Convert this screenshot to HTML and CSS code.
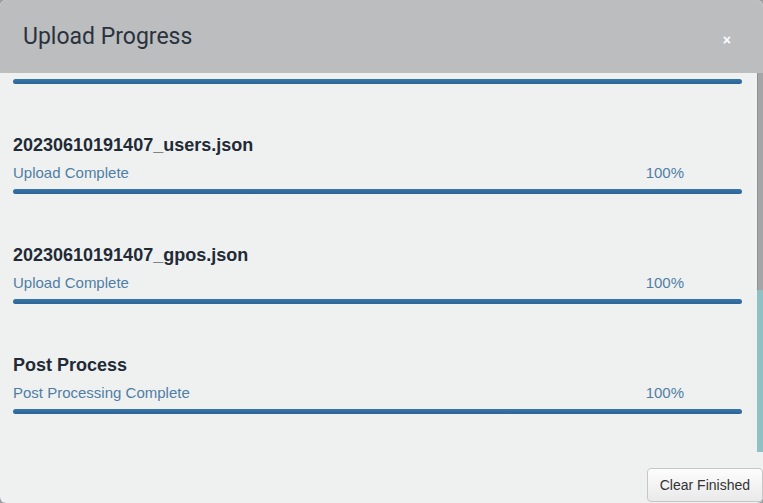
FILE: index.html
```html
<!DOCTYPE html>
<html lang="en">
<head>
    <meta charset="UTF-8">
    <title>Upload Progress</title>
    <link rel="stylesheet" href="styles.css">
</head>
<body>
    <div class="modal">
        <div class="modal-header">
            <h2>Upload Progress</h2>
            <button type="button" class="close">&times;</button>
        </div>

        <div class="modal-body">
            <div class="upload-list">
                <!-- tail of the previous item, scrolled out of view -->
                <div class="upload first">
                    <div class="bar"><div class="fill" style="width: 100%;"></div></div>
                </div>

                <div class="upload">
                    <h3>20230610191407_users.json</h3>
                    <div class="status">
                        <span>Upload Complete</span>
                        <span class="pct">100%</span>
                    </div>
                    <div class="bar"><div class="fill" style="width: 100%;"></div></div>
                </div>

                <div class="upload">
                    <h3>20230610191407_gpos.json</h3>
                    <div class="status">
                        <span>Upload Complete</span>
                        <span class="pct">100%</span>
                    </div>
                    <div class="bar"><div class="fill" style="width: 100%;"></div></div>
                </div>

                <div class="upload">
                    <h3>Post Process</h3>
                    <div class="status">
                        <span>Post Processing Complete</span>
                        <span class="pct">100%</span>
                    </div>
                    <div class="bar"><div class="fill" style="width: 100%;"></div></div>
                </div>
            </div>
            <div class="rail">
                <div class="thumb"></div>
                <div class="track"></div>
            </div>
        </div>

        <div class="modal-footer">
            <button type="button" class="btn">Clear Finished</button>
        </div>
    </div>
</body>
</html>
```

FILE: styles.css
```css
html {
    background: #9d9e9f;
}
body {
    margin: 0;
    padding: 0;
    font-family: "Liberation Sans", Arial, sans-serif;
    height: 503px;
    overflow: hidden;
}
.modal {
    background-color: #eff1f1;
    border-radius: 6px;
    height: 503px;
    overflow: hidden;
    display: flex;
    flex-direction: column;
}
.modal-header {
    background-color: #bcbdbf;
    height: 73px;
    display: flex;
    align-items: center;
    justify-content: space-between;
    padding: 0 32px 0 23px;
    flex-shrink: 0;
}
.modal-header h2 {
    margin: 0;
    font-family: Roboto, "Liberation Sans", sans-serif;
    font-weight: 400;
    font-size: 23px;
    color: #2a323d;
}
.close {
    background: none;
    border: none;
    padding: 0;
    color: #fff;
    font-family: "Liberation Sans", Arial, sans-serif;
    font-weight: bold;
    font-size: 14px;
    line-height: 14px;
    cursor: pointer;
    position: relative;
    top: 3px;
}
.modal-body {
    display: flex;
    height: 379px;
    flex-shrink: 0;
}
.upload-list {
    flex: 1;
    padding: 0 15px 0 13px;
    overflow: hidden;
}
.upload {
    padding-top: 49px;
}
.upload.first {
    padding-top: 6px;
}
.upload h3 {
    margin: 0;
    font-size: 18px;
    line-height: 24px;
    font-weight: bold;
    color: #222a35;
}
.status {
    display: flex;
    justify-content: space-between;
    margin-top: 6px;
    padding-right: 58px;
    font-size: 15px;
    line-height: 20px;
    color: #4f7ea4;
}
.bar {
    margin-top: 6px;
    height: 5px;
    border-radius: 3px;
    background-color: #d8dde0;
    overflow: hidden;
}
.upload.first .bar {
    margin-top: 0;
}
.fill {
    height: 100%;
    background: linear-gradient(#3a76aa, #2c6496);
}
.rail {
    width: 6px;
    display: flex;
    flex-direction: column;
}
.thumb {
    height: 217px;
    background-color: #a4a5a7;
    border-left: 1px solid #8e8f91;
}
.track {
    flex: 1;
    background-color: #8fc0c4;
}
.modal-footer {
    display: flex;
    justify-content: flex-end;
    padding: 16px 0 0 0;
}
.btn {
    font-family: "Liberation Sans", Arial, sans-serif;
    font-size: 14px;
    color: #333;
    background: linear-gradient(#fdfdfd, #e9e9e9);
    border: 1px solid #c6c6c6;
    border-radius: 4px;
    height: 34px;
    padding: 0 12px;
    cursor: pointer;
}
```
